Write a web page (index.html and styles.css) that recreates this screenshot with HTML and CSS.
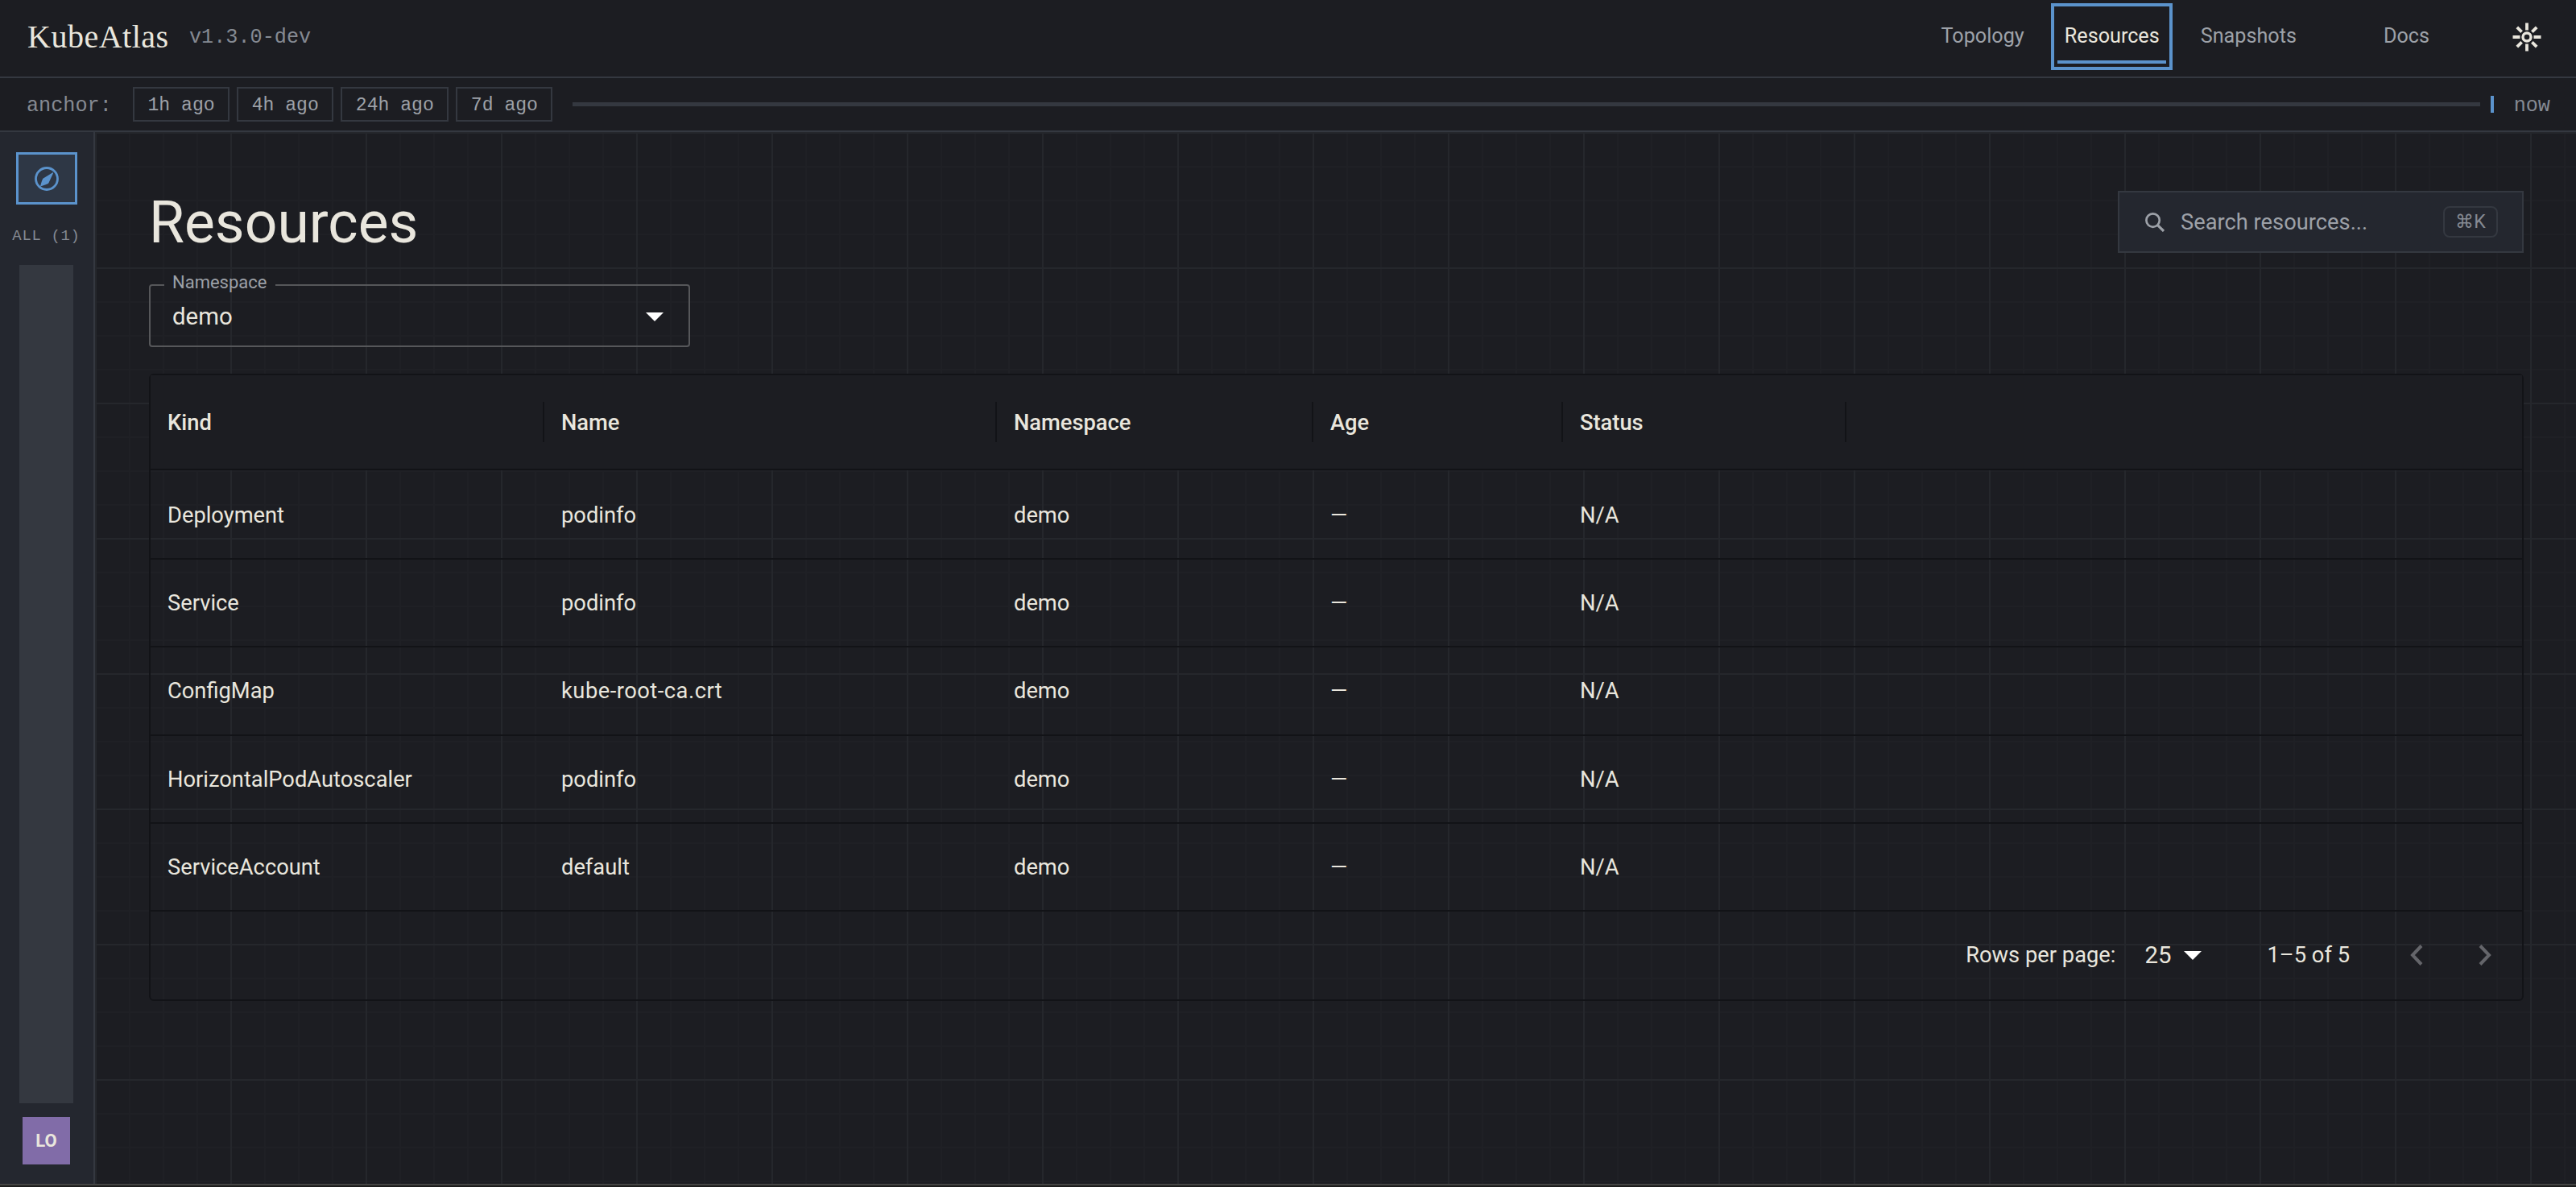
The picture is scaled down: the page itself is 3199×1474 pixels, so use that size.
FILE: index.html
```
<!DOCTYPE html>
<html lang="en">
<head>
    <meta charset="utf-8">
    <title>KubeAtlas</title>
    <link rel="stylesheet" href="styles.css">
</head>
<body>
    <header class="topbar">
        <span class="brand">KubeAtlas</span>
        <span class="version">v1.3.0-dev</span>
        <nav class="nav">
            <a class="nav-link topology">Topology</a>
            <a class="nav-link active">Resources</a>
            <a class="nav-link snapshots">Snapshots</a>
            <a class="nav-link docs">Docs</a>
        </nav>
        <svg class="theme-icon" viewBox="0 0 36 36" fill="none" stroke="currentColor">
            <circle cx="18" cy="18" r="5" stroke-width="3.4"/>
            <path stroke-width="3.8" d="M18 .5v9M18 26.5v9M.5 18h9M26.5 18h9M5.8 5.8l5.8 5.8M24.4 24.4l5.8 5.8M30.2 5.8l-5.8 5.8M11.6 24.4l-5.8 5.8"/>
        </svg>
    </header>

    <div class="anchor-bar">
        <span class="anchor-label">anchor:</span>
        <div class="chips">
            <button class="chip">1h ago</button>
            <button class="chip">4h ago</button>
            <button class="chip">24h ago</button>
            <button class="chip">7d ago</button>
        </div>
        <div class="track"></div>
        <div class="marker"></div>
        <span class="now">now</span>
    </div>

    <div class="body">
        <aside class="sidebar">
            <button class="compass">
                <svg viewBox="0 0 30 30">
                    <circle cx="15" cy="15" r="13.5" fill="none" stroke="currentColor" stroke-width="2.8"/>
                    <path fill="currentColor" d="M22.5 7.2c.8 0 .7.7.4 1.3L18.2 18.5Q17.6 20.2 16.8 21L13 22.5Q9 24 7 24.5Q9 17 10.3 14.8Z"/>
                </svg>
            </button>
            <span class="all">ALL (1)</span>
            <div class="cluster-bar"></div>
            <div class="avatar">LO</div>
        </aside>

        <main class="main">
            <div class="title-row">
                <h1 class="title">Resources</h1>
                <div class="search">
                    <svg class="search-icon" viewBox="0 0 24 24" fill="none" stroke="currentColor" stroke-width="2.7">
                        <circle cx="9.6" cy="9.6" r="8.2"/>
                        <path d="M15.3 15.3l7.7 7.7" stroke-width="3.2"/>
                    </svg>
                    <span>Search resources...</span>
                    <kbd class="kbd">⌘K</kbd>
                </div>
            </div>

            <fieldset class="select">
                <legend>Namespace</legend>
                <span>demo</span>
                <i class="caret"></i>
            </fieldset>

            <div class="grid">
                <div class="row head">
                    <div>Kind</div>
                    <div>Name</div>
                    <div>Namespace</div>
                    <div>Age</div>
                    <div>Status</div>
                </div>
                <div class="row">
                    <div>Deployment</div>
                    <div>podinfo</div>
                    <div>demo</div>
                    <div>—</div>
                    <div>N/A</div>
                </div>
                <div class="row">
                    <div>Service</div>
                    <div>podinfo</div>
                    <div>demo</div>
                    <div>—</div>
                    <div>N/A</div>
                </div>
                <div class="row">
                    <div>ConfigMap</div>
                    <div class="file-name">kube-root-ca.crt</div>
                    <div>demo</div>
                    <div>—</div>
                    <div>N/A</div>
                </div>
                <div class="row">
                    <div>HorizontalPodAutoscaler</div>
                    <div>podinfo</div>
                    <div>demo</div>
                    <div>—</div>
                    <div>N/A</div>
                </div>
                <div class="row">
                    <div>ServiceAccount</div>
                    <div>default</div>
                    <div>demo</div>
                    <div>—</div>
                    <div>N/A</div>
                </div>
                <div class="footer">
                    <span>Rows per page:</span>
                    <span class="page-size">25</span>
                    <i class="caret"></i>
                    <span class="range">1–5 of 5</span>
                    <svg class="chevron" viewBox="0 0 16 26"><path d="M14 1.5L3 13l11 11.5"/></svg>
                    <svg class="chevron next" viewBox="0 0 16 26"><path d="M2 1.5L13 13 2 24.5"/></svg>
                </div>
            </div>
        </main>
    </div>
    <div class="bottom-edge"></div>
</body>
</html>
```
FILE: styles.css
```
* {
    box-sizing: border-box;
}

body {
    margin: 0;
    height: 1474px;
    overflow: hidden;
    display: flex;
    flex-direction: column;
    background: #1c1d22;
    color: #e9e6dd;
    font-family: Roboto, "Noto Sans", sans-serif;
    font-size: 27.3px;
}

button, kbd {
    font: inherit;
    color: inherit;
    background: none;
    border: 0;
    padding: 0;
}

/* Top bar */
.topbar {
    height: 97px;
    flex: none;
    display: flex;
    align-items: center;
    padding: 0 43px 4px 34px;
    border-bottom: 2px solid #343840;
}

.brand {
    font-family: "Liberation Serif", serif;
    font-size: 40px;
    line-height: 48px;
    letter-spacing: 0.5px;
    width: 201px;
    padding-top: 1px;
}

.version {
    font-family: "Liberation Mono", monospace;
    font-size: 25.2px;
    padding-top: 2px;
    color: #858a93;
}

.nav {
    margin-left: auto;
    display: flex;
    font-size: 25.2px;
    color: #9da1a8;
}

.nav-link {
    height: 67px;
    display: flex;
    align-items: center;
    justify-content: center;
    padding: 0 9px 3px 11px;
}

.nav-link.active {
    width: 135px;
    padding: 1px 0 0 1px;
    color: #e9e6dd;
    border-bottom: 4px solid #5b93cc;
    outline: 4px solid #5b93cc;
    outline-offset: 4px;
}

.topology {
    margin-right: 32px;
}

.snapshots {
    margin: 0 88px 0 32px;
}

.theme-icon {
    width: 36px;
    height: 36px;
    margin-left: 94px;
}

/* Snapshot anchor */
.anchor-bar {
    height: 67px;
    flex: none;
    display: flex;
    align-items: center;
    padding: 0 32px 0 33px;
    border-bottom: 2px solid #343840;
    font-family: "Liberation Mono", monospace;
    font-size: 25.2px;
    color: #858a93;
}

.anchor-label {
    width: 132px;
    padding-top: 3px;
}

.now {
    padding-top: 3px;
}

.chips {
    display: flex;
    gap: 9px;
    margin-right: 25px;
}

.chip {
    height: 43px;
    padding: 3px 16.5px 0;
    border: 2px solid #343840;
    font-size: 23.1px;
    color: #9da1a8;
}

.track {
    flex: 1;
    height: 5px;
    background: #343840;
}

.marker {
    width: 4px;
    height: 21px;
    margin: 0 25px 0 13px;
    background: #5b93cc;
}

/* Sidebar */
.body {
    flex: 1;
    display: flex;
    min-height: 0;
}

.sidebar {
    width: 118px;
    flex: none;
    display: flex;
    flex-direction: column;
    align-items: center;
    padding: 25px 1px 24px 0;
    background: #24272f;
    border-right: 2px solid #343840;
}

.compass {
    width: 76px;
    height: 65px;
    display: flex;
    align-items: center;
    justify-content: center;
    border: 3px solid #5b93cc;
    background: #2e3745;
    color: #5b93cc;
}

.compass svg {
    width: 30px;
    height: 30px;
}

.all {
    height: 24px;
    margin: 27px 0 24px;
    line-height: 24px;
    font-family: "Liberation Mono", monospace;
    font-size: 18.9px;
    letter-spacing: 0.7px;
    white-space: nowrap;
    color: #858a93;
}

.cluster-bar {
    flex: 1;
    width: 67px;
    background: #343840;
}

.avatar {
    width: 59px;
    height: 59px;
    margin-top: 17px;
    line-height: 60px;
    text-align: center;
    background: #816ca8;
    font-size: 22px;
    font-weight: 700;
}

/* Main area over the graph paper grid */
.main {
    flex: 1;
    padding: 73px 65px 0 67px;
    background-image:
        linear-gradient(#25272c 2px, transparent 2px),
        linear-gradient(90deg, #25272c 2px, transparent 2px),
        linear-gradient(#1f2025 2px, transparent 2px),
        linear-gradient(90deg, #1f2025 2px, transparent 2px);
    background-size: 168px 168px, 168px 168px, 42px 42px, 42px 42px;
}

.title-row {
    display: flex;
    justify-content: space-between;
    height: 77px;
}

.title {
    margin: 0;
    font-size: 71.4px;
    line-height: 79px;
    font-weight: 400;
}

.search {
    width: 504px;
    height: 77px;
    display: flex;
    align-items: center;
    padding: 0 30px 0 32px;
    border: 2px solid #343840;
    background: #24272f;
    color: #9da1a8;
}

.search-icon {
    width: 24px;
    height: 24px;
    margin-right: 20px;
}

.kbd {
    margin-left: auto;
    width: 68px;
    height: 39px;
    line-height: 36px;
    text-align: center;
    border: 2px solid #343840;
    border-radius: 8px;
    font-size: 23.1px;
    color: #858a93;
}

.select {
    width: 672px;
    height: 89px;
    margin: 28px 0 33px;
    padding: 0 31px 9px 27px;
    border: 2px solid #56575a;
    border-radius: 4px;
    display: flex;
    align-items: center;
    font-size: 29.4px;
}

.select legend {
    margin-left: -10px;
    padding: 0 11px 6px 10px;
    font-size: 22px;
    line-height: 18px;
    color: #9da1a8;
}

.caret {
    border: 11px solid transparent;
    border-top-color: #fff;
    border-bottom: 0;
}

.select .caret {
    margin-left: auto;
}

/* Data grid */
.grid {
    height: 779px;
    border: 2px solid #121317;
    border-radius: 6px;
}

.row {
    height: 109.2px;
    display: grid;
    grid-template-columns: 489px 562px 393px 310px 352px;
    align-items: center;
    border-top: 2px solid #121317;
}

.row > div {
    padding: 1px 0 0 21px;
}

.head {
    height: 118px;
    border-top: 0;
    border-bottom: 2px solid #121317;
    background: #1c1d22;
    font-weight: 500;
}

.head + .row {
    border-top-color: transparent;
}

.head > div {
    height: 50px;
    line-height: 51px;
    border-right: 2px solid #121317;
}

.file-name {
    letter-spacing: 0.5px;
}

.footer {
    height: 111px;
    display: flex;
    align-items: center;
    justify-content: flex-end;
    padding-right: 38px;
    border-top: 2px solid #121317;
}

.page-size {
    font-size: 29.4px;
    margin: 0 16px 0 36px;
}

.range {
    margin: 0 75px 0 81px;
}

.chevron {
    width: 16px;
    height: 26px;
    fill: none;
    stroke: #64656a;
    stroke-width: 4;
}

.next {
    margin-left: 69px;
}

.bottom-edge {
    height: 4px;
    flex: none;
    border-top: 2px solid #444443;
    background: #1c1c1c;
}
```
